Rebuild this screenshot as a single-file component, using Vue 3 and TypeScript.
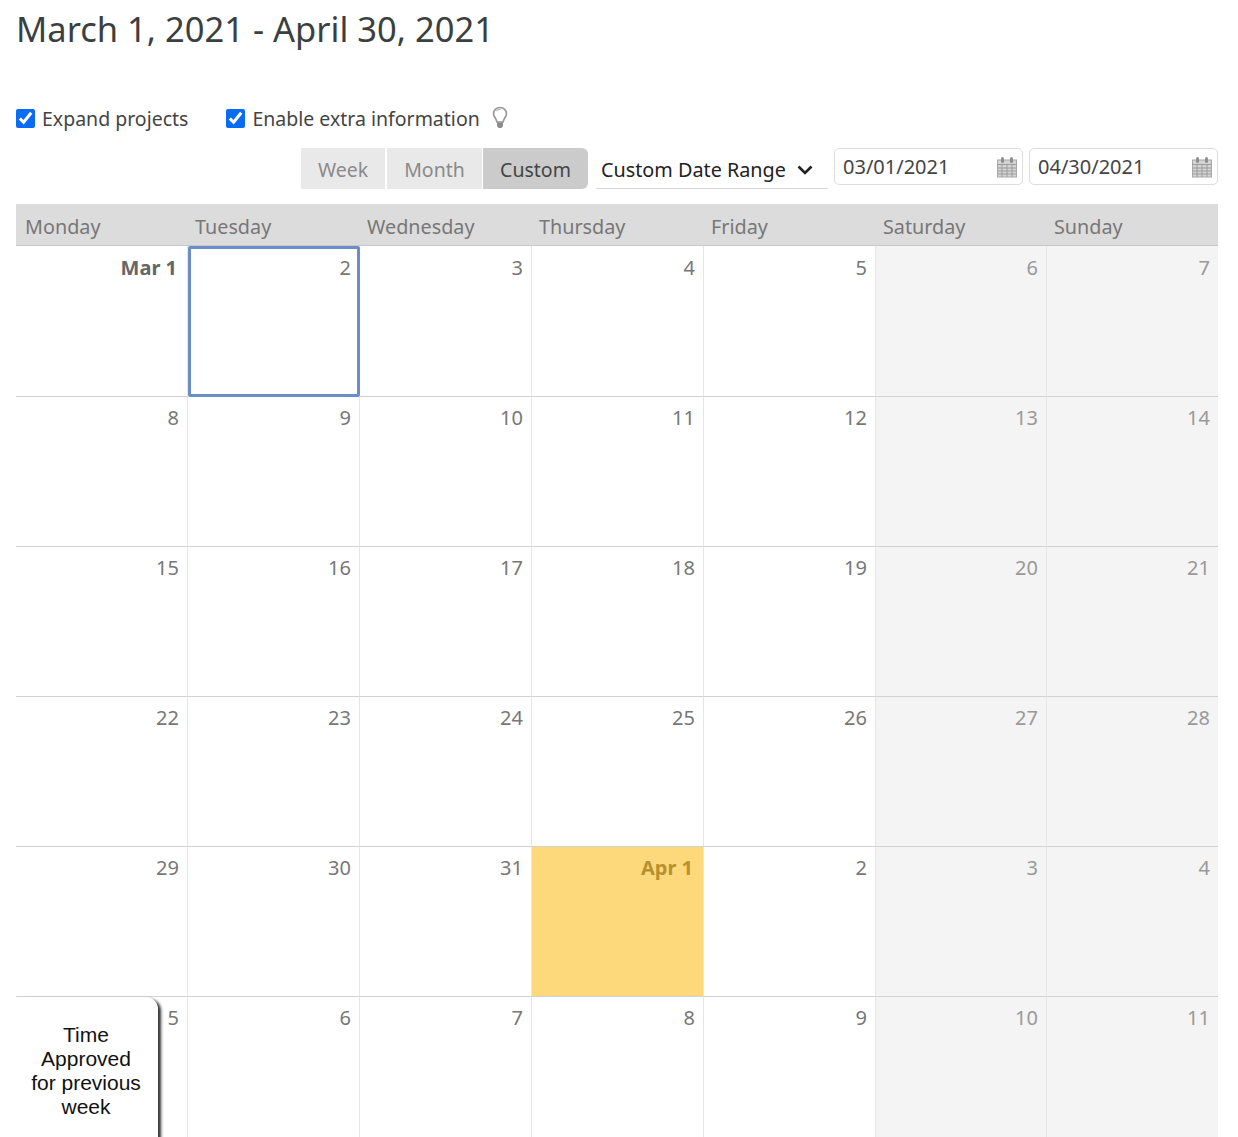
<script setup lang="ts">
interface Cell { label: string; bold?: boolean; weekend: boolean; today?: boolean; focus?: boolean }
const days = ['Monday', 'Tuesday', 'Wednesday', 'Thursday', 'Friday', 'Saturday', 'Sunday']
const labels = ['Mar 1','2','3','4','5','6','7','8','9','10','11','12','13','14','15','16','17','18','19','20','21','22','23','24','25','26','27','28','29','30','31','Apr 1','2','3','4','5','6','7','8','9','10','11']
const cells: Cell[] = labels.map((label, i) => ({
  label,
  bold: label.includes(' '),
  weekend: i % 7 >= 5,
  today: label === 'Apr 1',
  focus: i === 1,
}))
</script>

<template>
  <div class="page">
    <h1 class="title">March 1, 2021 - April 30, 2021</h1>
    <div class="checks">
      <label class="check"><input type="checkbox" checked /><span>Expand projects</span></label>
      <label class="check second"><input type="checkbox" checked /><span>Enable extra information</span></label>
      <svg class="bulb" width="16" height="24" viewBox="0 0 16 24">
        <path d="M8 1.500C4.200 1.500 1.500 4.200 1.500 7.500c0 3.600 3 5 3.400 8.500h6.200c.4-3.500 3.400-4.900 3.400-8.500C14.500 4.200 11.800 1.500 8 1.500Z" fill="#fff" stroke="#9a9a9a" stroke-width="1.700"/>
        <path d="M4.500 5C5.500 3.800 7 3.300 8.500 3.400" fill="none" stroke="#bbb" stroke-width="1.200"/>
        <path d="M5 16.500h6v3.500l-1.500 2h-3L5 20Z" fill="#8c8c8c"/>
      </svg>
    </div>
    <div class="toolbar">
      <div class="segments">
        <button class="seg week">Week</button>
        <button class="seg month">Month</button>
        <button class="seg active">Custom</button>
      </div>
      <div class="select">
        <span>Custom Date Range</span>
        <svg width="16" height="10" viewBox="0 0 16 10"><path d="M1.500 1.500l6.500 6.500 6.500-6.500" fill="none" stroke="#222" stroke-width="2.600"/></svg>
      </div>
      <div v-for="d in ['03/01/2021', '04/30/2021']" :key="d" class="date">
        <span>{{ d }}</span>
        <svg width="20" height="22" viewBox="0 0 20 22">
          <rect x="0.500" y="4" width="19" height="17" fill="#d4d4d4" stroke="#a8a8a8"/>
          <path d="M0 8.500h20M1 12h18M1 15h18M1 18h18M5 8v13M10 8v13M15 8v13" stroke="#9c9c9c" fill="none"/>
          <rect x="4" y="1" width="3" height="6" rx="1.500" fill="#8f8f8f"/>
          <rect x="13" y="1" width="3" height="6" rx="1.500" fill="#8f8f8f"/>
        </svg>
      </div>
    </div>
    <div class="head">
      <div v-for="d in days" :key="d" class="day">{{ d }}</div>
    </div>
    <div class="grid">
      <div
        v-for="(c, i) in cells"
        :key="i"
        class="cell"
        :class="{ weekend: c.weekend, today: c.today, focus: c.focus, bold: c.bold }"
      >{{ c.label }}</div>
    </div>
    <div class="tip">Time Approved for previous week</div>
  </div>
</template>

<style>
html, body { margin: 0; background: #fff; }
</style>

<style scoped>
.page {
  position: relative;
  height: 1137px;
  overflow: hidden;
  padding: 0 20px 0 16px;
  box-sizing: border-box;
  font-family: "Noto Sans", "Open Sans", sans-serif;
  color: #333;
}
.title {
  margin: 0;
  padding-top: 6px;
  height: 93px;
  box-sizing: border-box;
  font-size: 34.5px;
  line-height: 46px;
  font-weight: 400;
  color: #3a3f41;
}
.checks {
  display: flex;
  align-items: center;
  height: 36px;
  margin-top: 7px;
  font-size: 19.5px;
  color: #444;
}
.check { display: flex; align-items: center; }
.check.second { margin-left: 38px; }
.check input {
  width: 19px;
  height: 19px;
  margin: 0 7px 0 0;
  accent-color: #0a6cf5;
}
.bulb { margin-left: 12px; }
.toolbar {
  display: flex;
  align-items: flex-start;
  justify-content: flex-end;
  margin-top: 12px;
  height: 56px;
}
.segments { display: flex; gap: 1px; margin-right: 8px; }
.seg {
  height: 41px;
  border: 0;
  padding: 2px 0 0;
  background: #e9e9e9;
  color: #8a8a8a;
  font: inherit;
  font-size: 19.5px;
  width: 105px;
}
.seg.week { width: 85px; border-right: 1px solid #fff; }
.seg.month { width: 95px; }
.seg.active {
  background: #cbcbcb;
  color: #444;
  border-radius: 0 6px 6px 0;
}
.select {
  width: 232px;
  height: 41px;
  box-sizing: border-box;
  padding: 3px 15px 0 5px;
  display: flex;
  align-items: center;
  justify-content: space-between;
  border-bottom: 1px solid #d8d8d8;
  font-size: 19.8px;
  color: #222;
}
.date {
  width: 189px;
  height: 37px;
  box-sizing: border-box;
  border: 1px solid #ddd;
  border-radius: 5px;
  margin-left: 6px;
  padding: 0 5px 0 8px;
  display: flex;
  align-items: center;
  justify-content: space-between;
  font-size: 20px;
  color: #444;
}
.head {
  display: grid;
  grid-template-columns: repeat(5, 172px) repeat(2, 1fr);
  height: 42px;
  background: #dcdcdc;
  border-bottom: 1px solid #c8c8c8;
  box-sizing: border-box;
}
.day {
  padding: 5px 0 0 7px;
  font-size: 19.8px;
  line-height: 36px;
  color: #777;
}
.day:first-child { padding-left: 9px; }
.grid {
  display: grid;
  grid-template-columns: repeat(5, 172px) repeat(2, 1fr);
  grid-template-rows: 151px;
  grid-auto-rows: 150px;
}
.cell {
  box-sizing: border-box;
  padding: 5px 8px 0 0;
  text-align: right;
  font-size: 20px;
  line-height: 32px;
  color: #777;
  border-bottom: 1px solid #d2d2d2;
  border-right: 1px solid #e6e6e6;
}
.cell:nth-child(-n+7) { padding-top: 6px; }
.cell:nth-child(7n) { border-right: 0; }
.cell.weekend { background: #f4f4f4; color: #999; }
.cell.bold { font-weight: 700; color: #666; padding-right: 10px; }
.cell.today { background: #fdd97c; color: #b8912f; }
.cell.focus { border: 3px solid #6c8cca; border-radius: 2px; padding: 3px 6px 0 0; }
.tip {
  position: absolute;
  left: 14px;
  top: 997px;
  width: 144px;
  height: 160px;
  box-sizing: border-box;
  padding: 26px 12px 0;
  background: #fff;
  border-radius: 12px;
  box-shadow: 3px 2px 3px #333;
  font-family: "Liberation Sans", Arial, sans-serif;
  font-size: 21px;
  line-height: 24px;
  color: #111;
  text-align: center;
}
</style>
